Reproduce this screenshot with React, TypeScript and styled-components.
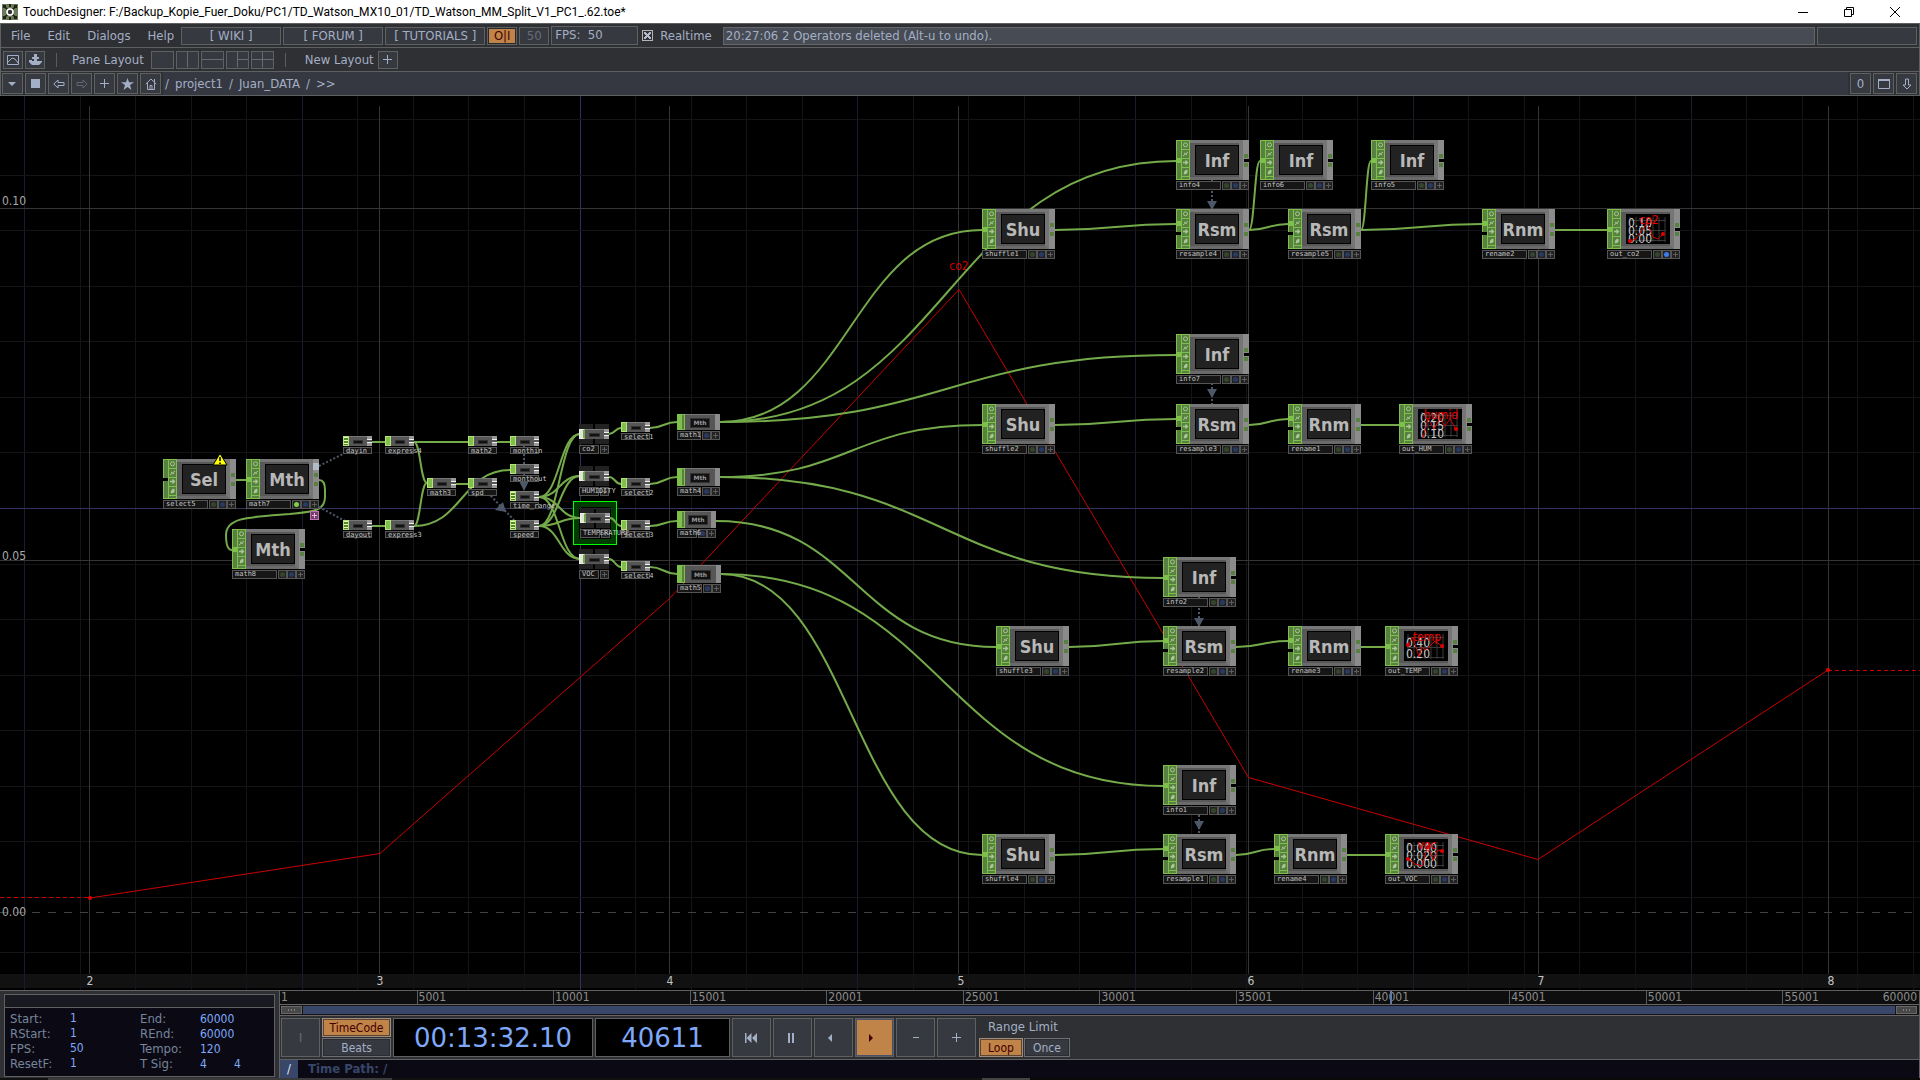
import React from "react";
import styled, { createGlobalStyle, css } from "styled-components";

const UI = '"DejaVu Sans Condensed", "DejaVu Sans", Verdana, sans-serif';
const WIDE = '"DejaVu Sans", Verdana, sans-serif';
const MONO = '"DejaVu Sans Mono", monospace';

const c = {
  bar: "#2f3033",
  line: "#5f6062",
  btn: "#373941",
  text: "#a3afc6",
  orange: "#c08348",
  maroon: "#430000",
  navy: "#0b0a14",
  blue: "#7fa8f8",
  range: "#374669",
  green: "#7dc14b",
  greenDark: "#588040",
  wire: "#74aa4a",
  slate: "#4c5868",
};

const Global = createGlobalStyle`
  *, *::before, *::after { box-sizing: border-box; }
  body { margin: 0; background: #000; overflow: hidden; }
  button, input { font: inherit; color: inherit; margin: 0; }
`;

const App = styled.div`
  display: flex;
  flex-direction: column;
  height: 100vh;
  font: 12px/14px ${UI};
  color: ${c.text};
  background: ${c.bar};
`;

/* ---------- window title ---------- */

const TitleBar = styled.header`
  display: flex;
  align-items: center;
  flex: none;
  height: 23px;
  padding-left: 2px;
  gap: 5px;
  background: #fff;
  color: #000;
`;
const Title = styled.h1`
  flex: 1;
  margin: 0;
  font: 12px/20px Roboto, "Open Sans", sans-serif;
  white-space: nowrap;
`;
const WindowButtons = styled.div`
  display: flex;
  padding-right: 2px;
`;
const WindowButton = styled.button`
  display: grid;
  place-items: center;
  width: 46px;
  height: 20px;
  padding: 0;
  border: 0;
  background: none;
`;

/* ---------- tool bars ---------- */

const Bar = styled.div`
  display: flex;
  align-items: center;
  flex: none;
  height: 24px;
  border: 1px solid ${c.line};
  border-bottom: 0;
  background: ${c.bar};
  font-size: 13px;
  white-space: nowrap;
`;
const MenuBar = styled(Bar)`
  gap: 2px;
  padding: 0 2px;
`;
const Menus = styled.nav`
  display: flex;
  gap: 17px;
  padding: 0 5px 0 8px;
`;
const MenuItem = styled.button`
  padding: 0;
  border: 0;
  background: none;
`;
const Boxed = css`
  border: 1px solid ${c.line};
  background: ${c.btn};
`;
const BarButton = styled.button<{ $w: number; $on?: boolean; $dim?: boolean }>`
  ${Boxed}
  width: ${(p) => p.$w}px;
  height: 18px;
  padding: 0;
  line-height: 16px;
  white-space: pre;
  ${(p) => p.$dim && "color: #696c74;"}
  ${(p) =>
    p.$on &&
    css`
      background: ${c.orange};
      color: ${c.maroon};
      box-shadow: inset 0 0 0 1px #26282e;
    `}
`;
const Fps = styled.output`
  ${Boxed}
  width: 87px;
  height: 19px;
  padding-left: 3px;
  line-height: 16px;
  white-space: pre;
`;
const Realtime = styled.label`
  display: flex;
  align-items: center;
  gap: 7px;
  padding: 0 9px 0 2px;
`;
const Tick = styled.input`
  appearance: none;
  display: grid;
  place-items: center;
  width: 11px;
  height: 11px;
  border: 1px solid #b4b4b4;
  &:checked::before {
    content: "";
    width: 7px;
    height: 7px;
    background: linear-gradient(45deg, transparent 38%, #b4bccc 38% 62%, transparent 62%),
      linear-gradient(-45deg, transparent 38%, #b4bccc 38% 62%, transparent 62%);
  }
`;
const Message = styled.input`
  flex: 1;
  min-width: 0;
  height: 18px;
  padding: 0 2px;
  border: 1px solid #63676d;
  background: #474b53;
  outline: 0;
`;
const Empty = styled.div`
  ${Boxed}
  width: 100px;
  height: 18px;
`;

const PaneBar = styled(Bar)`
  gap: 2px;
  padding: 0 2px;
`;
const Divider = styled.span<{ $after: number }>`
  width: 1px;
  height: 14px;
  margin: 0 ${(p) => p.$after}px 0 9px;
  background: #5a5b5e;
`;
const BarLabel = styled.span<{ $after: number }>`
  padding-right: ${(p) => p.$after}px;
`;
const IconButton = styled.button<{ $w?: number; $h?: number; $dim?: boolean }>`
  ${Boxed}
  display: grid;
  place-items: center;
  width: ${(p) => p.$w ?? 20}px;
  height: ${(p) => p.$h ?? 18}px;
  padding: 0;
  color: ${(p) => (p.$dim ? "#62656c" : c.text)};
`;

const PathBar = styled(Bar)`
  gap: 2px;
  padding: 0 2px 0 1px;
`;
const Crumbs = styled.div`
  display: flex;
  align-items: center;
  flex: 1;
  align-self: stretch;
  gap: 6px;
  padding-left: 2px;
  background: #363841;
`;
const Crumb = styled.a`
  color: inherit;
  text-decoration: none;
`;

/* ---------- network canvas ---------- */

const TOP = 96;

const Canvas = styled.main`
  position: relative;
  flex: 1;
  min-height: 0;
  overflow: hidden;
  border-top: 1px solid ${c.line};
  background: #000;
`;
const Drawing = styled.svg`
  position: absolute;
  inset: 0;
  width: 100%;
  height: 100%;
`;
const AxisStrip = styled.div`
  position: absolute;
  left: 0;
  right: 0;
  bottom: 2px;
  height: 14px;
  background: #111;
`;

const NodeBox = styled.div<{ $x: number; $y: number; $w: number }>`
  position: absolute;
  left: ${(p) => p.$x}px;
  top: ${(p) => p.$y - TOP}px;
  width: ${(p) => p.$w}px;
`;
const Tile = styled.div`
  display: flex;
  height: 40px;
`;
const Body = styled.div`
  display: flex;
  align-items: center;
  justify-content: flex-end;
  flex: 1;
  border-top: 3px solid #777;
  border-right: 4px solid #757575;
  border-bottom: 3px solid #6a6a6a;
  background: #585858;
`;
const Screen = styled.div`
  width: 44px;
  height: 30px;
  border: 1px solid #000;
  background: #222;
  color: #b8b8b8;
  font: bold 18px/29px ${UI};
  text-align: center;
`;
const Foot = styled.div<{ $h?: number }>`
  display: flex;
  gap: 1px;
  height: ${(p) => p.$h ?? 9}px;
  margin-top: 1px;
`;
const Name = styled.span`
  position: relative;
  z-index: 1;
  flex: 1;
  min-width: 0;
  padding-left: 2px;
  border: 1px solid #555;
  background: #161616;
  color: #c4c4c4;
  font: 7px/6px ${MONO};
  white-space: nowrap;
`;
const Flags = styled.span`
  display: flex;
`;
const Flag = styled.i<{ $c: string }>`
  display: grid;
  place-items: center;
  width: 9px;
  border: 1px solid #555;
  background: #222;
  &::before {
    content: "";
    width: 5px;
    height: 5px;
    border-radius: 50%;
    background: ${(p) => p.$c};
  }
`;
const PlusFlag = styled(Flag)`
  &::before {
    border-radius: 0;
    background: linear-gradient(#5c5c5c, #5c5c5c) center / 5px 1px no-repeat,
      linear-gradient(#5c5c5c, #5c5c5c) center / 1px 5px no-repeat;
  }
`;

const SmallTile = styled.div<{ $h: number }>`
  display: flex;
  height: ${(p) => p.$h}px;
  background: #777;
`;
const SmallIn = styled.span<{ $w: number; $comp?: boolean; $lines?: boolean }>`
  width: ${(p) => p.$w}px;
  border: 1px solid ${(p) => (p.$comp ? "#eee" : "#b8e07a")};
  background: ${(p) =>
    p.$lines
      ? "repeating-linear-gradient(#e4ffb0 0 1px, #4e8a2a 1px 3px)"
      : p.$comp
        ? "#dfe6d8"
        : c.green};
  ${(p) => p.$comp && `border-right: 2px solid ${c.wire};`}
`;
const MidIn = styled.span`
  width: 8px;
  border: 1px solid ${c.green};
  background: linear-gradient(90deg, ${c.green} 0 4px, ${c.greenDark} 4px);
`;
const SmallBody = styled.span`
  display: grid;
  place-items: center;
  flex: 1;
  border-top: 1px solid #777;
  background: #565656;
`;
const SmallScreen = styled.span<{ $w: number; $h: number }>`
  width: ${(p) => p.$w}px;
  height: ${(p) => p.$h}px;
  background: #111;
  color: #999;
  font: bold 6px/8px ${WIDE};
  text-align: center;
  outline: 1px solid #333;
`;
const SmallOut = styled.span`
  width: 5px;
  background: linear-gradient(#999 0 3px, #eee 3px 4px, #555 4px 6px, #eee 6px 7px, #999 7px);
`;
const MidOut = styled.span`
  width: 5px;
  background: #8c8c8c;
`;
const Blocks = styled.div`
  display: flex;
  justify-content: space-between;
  height: 5px;
  &::before,
  &::after {
    content: "";
    width: 14px;
    background: #222;
  }
`;
const Selection = styled.div`
  position: absolute;
  left: 573px;
  top: ${501 - TOP}px;
  width: 44px;
  height: 44px;
  border: 1px solid #00ff00;
  box-shadow: inset 0 0 0 5px #003c00;
`;

const SocketStrip = ({ two, wired = true }: { two?: boolean; wired?: boolean }) => (
  <svg width="14" height="40">
    <rect width="14" height="40" fill={c.green} />
    <rect x="1" y="1" width="4" height="38" fill={c.greenDark} />
    {[1, 10, 19, 28].map((y) => (
      <rect key={y} x="6" y={y} width="7" height="8" fill={c.greenDark} />
    ))}
    <rect x="6" y="37" width="7" height="2" fill={c.greenDark} />
    {wired && <rect x="0" y={two ? 12 : 18} width="5" height="5" fill={c.green} />}
    {two && <rect x="0" y="23" width="5" height="3" fill="#000" />}
    {!wired && <rect x="0" y="19" width="5" height="3" fill="#000" />}
    <g fill="none" stroke="#a9c795">
      <circle cx="9.5" cy="4.8" r="2" />
      <path d="M7 16l5-4M8 13l3 2" />
      <path d="M7 22.5h4M9.5 20.5l2 2-2 2" strokeWidth="1.3" />
      <path d="M8 34l1-3 2-1v3z" fill="#a9c795" />
    </g>
  </svg>
);

const OutStrip = ({ open }: { open?: boolean }) => (
  <svg width="6" height="40">
    <rect width="6" height="40" fill="#8b8b8b" />
    {open && <rect x="1" y="19" width="5" height="3" fill="#000" />}
    <rect x="1" y="14" width="4" height="4" fill={c.greenDark} />
    <rect x="1" y="23" width="4" height="4" fill={c.greenDark} />
  </svg>
);

const Chart = styled.svg`
  display: block;
  overflow: visible;
`;

type Mini = { label: string; rows: string[]; path: string; dots: number[][] };
const MiniChart = ({ label, rows, path, dots }: Mini) => (
  <Chart width="42" height="28">
    <rect width="42" height="28" fill="#000" />
    <path d="M3 2v25M9 2v25M15 2v25M20 2v25M26 2v25M32 2v25M38 2v25M2 5.5h37M2 15.5h37M2 25.5h37" stroke="#3a3a3a" />
    <g fill="#c8c8c8" fontFamily={UI} fontSize="12" fontWeight="normal">
      {rows.map((r, i) => (
        <text key={i} x="1" y={rows.length === 2 ? 15 + i * 11 : 12 + i * 8}>
          {r}
        </text>
      ))}
    </g>
    <path d={path} fill="none" stroke="#d40000" />
    {dots.map(([x, y]) => (
      <circle key={x} cx={x} cy={y} r="2" fill="#e00000" />
    ))}
    <text x="22" y="9" fill="#ee0000" fontFamily={UI} fontSize="12" fontWeight="normal" textAnchor="middle">
      {label}
    </text>
  </Chart>
);

type Op = {
  x: number;
  y: number;
  tag?: string;
  name: string;
  two?: boolean;
  open?: boolean;
  loose?: boolean;
  bypass?: boolean;
  shown?: boolean;
  mini?: Mini;
};

const ops: Op[] = [
  { x: 163, y: 459, tag: "Sel", name: "select5", loose: true },
  { x: 246, y: 459, tag: "Mth", name: "math7", bypass: true },
  { x: 232, y: 529, tag: "Mth", name: "math8", open: true },
  { x: 1176, y: 140, tag: "Inf", name: "info4", open: true },
  { x: 1260, y: 140, tag: "Inf", name: "info6", open: true },
  { x: 1371, y: 140, tag: "Inf", name: "info5", open: true },
  { x: 982, y: 209, tag: "Shu", name: "shuffle1" },
  { x: 1176, y: 209, tag: "Rsm", name: "resample4", two: true },
  { x: 1288, y: 209, tag: "Rsm", name: "resample5", two: true },
  { x: 1482, y: 209, tag: "Rnm", name: "rename2", two: true },
  {
    x: 1607, y: 209, name: "out_co2", open: true, shown: true,
    mini: { label: "co2", rows: ["0.10", "0.05", "0.00"], path: "M3 26L9 24L20 8L26 22L31 24L36 19", dots: [[3, 26], [36, 19]] },
  },
  { x: 1176, y: 334, tag: "Inf", name: "info7", open: true },
  { x: 982, y: 404, tag: "Shu", name: "shuffle2" },
  { x: 1176, y: 404, tag: "Rsm", name: "resample3", two: true },
  { x: 1288, y: 404, tag: "Rnm", name: "rename1", two: true },
  {
    x: 1399, y: 404, name: "out_HUM", open: true,
    mini: { label: "humid", rows: ["0.20", "0.15", "0.10"], path: "M4 28L9 8L15 19L21 8L26 16L31 9L37 19", dots: [[37, 19]] },
  },
  { x: 1163, y: 557, tag: "Inf", name: "info2", open: true },
  { x: 996, y: 626, tag: "Shu", name: "shuffle3" },
  { x: 1163, y: 626, tag: "Rsm", name: "resample2", two: true },
  { x: 1288, y: 626, tag: "Rnm", name: "rename3", two: true },
  {
    x: 1385, y: 626, name: "out_TEMP", open: true,
    mini: { label: "temp", rows: ["0.40", "0.20"], path: "M3 13L8 5L14 25L17 15L20 18L24 15L30 9L37 14", dots: [[3, 13], [37, 14]] },
  },
  { x: 1163, y: 765, tag: "Inf", name: "info1", open: true },
  { x: 982, y: 834, tag: "Shu", name: "shuffle4" },
  { x: 1163, y: 834, tag: "Rsm", name: "resample1", two: true },
  { x: 1274, y: 834, tag: "Rnm", name: "rename4", two: true },
  {
    x: 1385, y: 834, name: "out_VOC", open: true,
    mini: { label: "voc", rows: ["0.040", "0.020", "0.000"], path: "M3 19L10 24L17 26L23 5L28 20L33 10L37 11", dots: [[3, 19], [37, 11]] },
  },
];

const Operator = ({ x, y, tag, name, two, open, loose, bypass, shown, mini }: Op) => (
  <NodeBox $x={x} $y={y} $w={73}>
    <Tile>
      <SocketStrip two={two} wired={!loose} />
      <Body>
        <Screen>{mini ? <MiniChart {...mini} /> : tag}</Screen>
      </Body>
      <OutStrip open={open} />
    </Tile>
    <Foot>
      <Name>{name}</Name>
      <Flags>
        <Flag $c={bypass ? "#7dd04a" : "#33452b"} />
        <Flag $c={shown ? "#3b7cf0" : "#263a63"} />
        <PlusFlag $c="" />
      </Flags>
    </Foot>
  </NodeBox>
);

type SmallOp = { x: number; y: number; name: string; lines?: boolean };
const smallOps: SmallOp[] = [
  { x: 343, y: 436, name: "dayin", lines: true },
  { x: 385, y: 436, name: "express4" },
  { x: 427, y: 478, name: "math3" },
  { x: 343, y: 520, name: "dayout", lines: true },
  { x: 385, y: 520, name: "express3" },
  { x: 468, y: 436, name: "math2" },
  { x: 510, y: 436, name: "monthin" },
  { x: 510, y: 464, name: "monthout" },
  { x: 468, y: 478, name: "spd" },
  { x: 510, y: 491, name: "time_range", lines: true },
  { x: 510, y: 520, name: "speed", lines: true },
  { x: 621, y: 422, name: "select1" },
  { x: 621, y: 478, name: "select2" },
  { x: 621, y: 520, name: "select3" },
  { x: 621, y: 561, name: "select4" },
];
const comps: SmallOp[] = [
  { x: 579, y: 424, name: "co2" },
  { x: 579, y: 466, name: "HUMIDITY" },
  { x: 580, y: 508, name: "TEMPERATURE" },
  { x: 579, y: 549, name: "VOC" },
];
const midOps = [
  { x: 677, y: 414, w: 43, h: 16, name: "math1" },
  { x: 677, y: 468, w: 43, h: 18, name: "math4" },
  { x: 677, y: 511, w: 39, h: 17, name: "math6" },
  { x: 677, y: 565, w: 44, h: 18, name: "math5" },
];

/* ---------- wires ---------- */

type Wire = [number, number, number, number];
const wires: Wire[] = [
  [720, 422, 982, 230], [720, 422, 1176, 161], [720, 422, 1176, 355],
  [720, 477, 982, 425], [720, 477, 1163, 578],
  [716, 521, 996, 647],
  [721, 574, 1163, 786], [721, 574, 982, 855],
  [1055, 230, 1176, 224], [1249, 230, 1288, 224], [1249, 230, 1260, 161],
  [1361, 230, 1482, 224], [1361, 230, 1371, 161], [1555, 230, 1607, 230],
  [1055, 425, 1176, 419], [1249, 425, 1288, 419], [1361, 425, 1399, 425],
  [1069, 647, 1163, 641], [1236, 647, 1288, 641], [1361, 647, 1385, 647],
  [1055, 855, 1163, 849], [1236, 855, 1274, 849], [1347, 855, 1385, 855],
  [236, 480, 246, 480],
  [372, 442, 385, 442], [414, 442, 468, 442], [414, 442, 427, 483],
  [372, 526, 385, 526], [414, 526, 427, 483], [414, 526, 510, 470],
  [456, 484, 468, 484], [497, 442, 510, 442],
  ...[497, 526].flatMap((y) => [434, 476, 518, 559].map((t): Wire => [539, y, 580, t])),
  [609, 434, 621, 428], [609, 477, 621, 484], [610, 518, 621, 526], [609, 559, 621, 567],
  [650, 428, 677, 422], [650, 484, 677, 477], [650, 526, 677, 521], [650, 567, 677, 574],
];
const curve = ([a, b, d, e]: Wire) => {
  const m = (a + d) / 2;
  return `M${a} ${b}C${m} ${b} ${m} ${e} ${d} ${e}`;
};

const steps = (from: number, n: number) => Array.from({ length: n }, (_, i) => from + i);

const Backdrop = () => (
  <Drawing>
    <g transform={`translate(0 ${-TOP})`}>
      {steps(-10, 48).map((i) => (
        <rect key={`v${i}`} x={Math.floor(580 + i * 55.55)} y="96" width="1" height="894"
          fill={i === 0 ? "#30305c" : i % 5 === 0 ? "#1b1b2c" : "#131318"} />
      ))}
      {steps(-7, 16).map((i) => (
        <rect key={`h${i}`} x="0" y={Math.round(508 + i * 55.55)} width="100%" height="1"
          fill={i === 0 ? "#33335e" : "#131318"} />
      ))}
      {steps(0, 7).map((i) => (
        <rect key={`g${i}`} x={Math.round(89 + i * 289.8)} y="106" width="1" height="868" fill="#353535" />
      ))}
      <path d="M0 208.5H4000M0 560.5H4000" stroke="#353535" />
      <path d="M0 912.5H4000" stroke="#404040" strokeDasharray="8 8" />
      <g fill="none" stroke="#cc0000">
        <path d="M90 898L380 853.5L669 599L959 289.5L1248.5 777.5L1538 859.5L1828 670" />
        <path d="M0 897.5H90M1828 670.5H4000" strokeDasharray="4 3" />
      </g>
      <circle cx="90" cy="898" r="2" fill="#e00000" />
      <circle cx="1828" cy="670" r="2" fill="#e00000" />
      <text x="959" y="270" textAnchor="middle" fill="#d00000" fontFamily={UI} fontSize="12">
        co2
      </text>
      <g fill="#a8a8a8" fontFamily={UI} fontSize="12">
        <text x="2" y="205">0.10</text>
        <text x="2" y="560">0.05</text>
        <text x="2" y="916">0.00</text>
      </g>
    </g>
  </Drawing>
);

const AxisLabels = () => (
  <Drawing>
    <g transform={`translate(0 ${-TOP})`} fill="#c4c4c4" fontFamily={UI} fontSize="12" textAnchor="middle">
      {steps(0, 7).map((i) => (
        <text key={i} x={Math.round(90 + i * 290.2)} y="985">
          {i + 2}
        </text>
      ))}
    </g>
  </Drawing>
);

const Wires = () => (
  <Drawing>
    <g transform={`translate(0 ${-TOP})`} fill="none">
      <g stroke={c.wire} strokeWidth="2">
        {wires.map((w, i) => (
          <path key={i} d={curve(w)} />
        ))}
        <path d="M319 480C324 480 325 485 325 490V497C325 512 310 512 290 514C250 517 226 517 226 535C226 546 228 550 232 550" />
      </g>
      <path d="M319 466L347 452M319 507L347 522M524 446V482M488 493L514 520" stroke={c.slate} strokeWidth="2" strokeDasharray="2 2" />
      <path d="M519 481h10l-5 10zM495 510l8-8 3 10z" fill={c.slate} />
      {[[1212, 179], [1212, 367], [1199, 596], [1199, 799]].map(([x, y]) => (
        <g key={y}>
          <path d={`M${x} ${y}v37`} stroke={c.slate} strokeWidth="2" strokeDasharray="2 2" />
          <path d={`M${x - 5} ${y + 22}h10l-5 9z`} fill={c.slate} />
        </g>
      ))}
    </g>
  </Drawing>
);

const Badges = () => (
  <Drawing>
    <g transform={`translate(0 ${-TOP})`}>
      <path d="M220 453.5l7 11.5h-14z" fill="#ff0" stroke="#000" strokeLinejoin="round" />
      <path d="M220 457v4M220 462.5v1.5" stroke="#000" strokeWidth="1.6" />
      <rect x="310.5" y="511.5" width="8" height="8" fill="#70406a" stroke="#c46cb4" />
      <path d="M312 515.5h5M314.5 513v5" stroke="#e6b4dc" />
      <rect x="313" y="463" width="6" height="7" fill="#b0bcc8" />
    </g>
  </Drawing>
);

/* ---------- timeline ---------- */

const Timeline = styled.footer`
  display: grid;
  grid-template-columns: 279px 1fr;
  flex: none;
  height: 88px;
  border-top: 1px solid ${c.line};
`;
const Settings = styled.section`
  display: flex;
  flex-direction: column;
  margin: 3px 4px 1px 4px;
  border: 1px solid ${c.line};
  background: ${c.navy};
`;
const SettingsHead = styled.div`
  flex: none;
  height: 13px;
  border-bottom: 1px solid ${c.line};
  background: #191922;
`;
const SettingsGrid = styled.div`
  display: grid;
  grid-template-columns: 60px 70px 60px 1fr;
  grid-auto-rows: 15px;
  padding: 3px 0 0 5px;
  color: #76859a;
  font-size: 13px;
  line-height: 15px;
`;
const Value = styled.input`
  min-width: 0;
  width: 34px;
  padding: 0;
  border: 0;
  outline: 0;
  background: none;
  color: ${c.blue};
  font-size: 12px;
  line-height: 15px;
`;
const Right = styled.section`
  display: flex;
  flex-direction: column;
  min-width: 0;
  border-left: 1px solid ${c.line};
  border-right: 1px solid ${c.line};
`;
const Ruler = styled.div`
  position: relative;
  display: grid;
  grid-template-columns: repeat(12, 1fr);
  flex: none;
  height: 14px;
  border-bottom: 1px solid #686468;
  background: #0e0e0e;
  color: #8c8c8c;
  line-height: 13px;
`;
const RulerCell = styled.span`
  padding-left: 1px;
  & + & {
    border-left: 1px solid #5c5c5c;
  }
`;
const RulerEnd = styled.span`
  position: absolute;
  right: 2px;
  top: 0;
`;
const Playhead = styled.i`
  position: absolute;
  left: 67.7%;
  top: 0;
  bottom: 0;
  width: 2px;
  background: #6478a4;
`;
const RangeRow = styled.div`
  display: flex;
  gap: 1px;
  flex: none;
  height: 11px;
  padding: 1px 2px 1px 1px;
  border-bottom: 1px solid #686468;
  background: #141414;
`;
const Handle = styled.button`
  width: 21px;
  padding: 0;
  border: 1px solid #686868;
  background: repeating-linear-gradient(90deg, #808080 0 1px, transparent 1px 3px) center / 7px 2px no-repeat #484848;
`;
const Range = styled.div`
  flex: 1;
  background: ${c.range};
`;
const Transport = styled.div`
  display: flex;
  gap: 2px;
  flex: none;
  height: 44px;
  padding: 2px 1px;
  border-bottom: 1px solid ${c.line};
`;
const Square = styled.button<{ $on?: boolean; $dim?: boolean }>`
  ${Boxed}
  display: grid;
  place-items: center;
  width: 39px;
  height: 39px;
  padding: 0;
  color: ${(p) => (p.$dim ? "#6c7078" : p.$on ? c.maroon : c.text)};
  ${(p) => p.$on && `background: ${c.orange}; box-shadow: inset 0 0 0 1px #4a5068;`}
`;
const Stack = styled.div`
  display: flex;
  flex-direction: column;
  gap: 1px;
`;
const Toggle = styled.button<{ $w: number; $on?: boolean }>`
  width: ${(p) => p.$w}px;
  height: 19px;
  padding: 0;
  border: 1px solid ${(p) => (p.$on ? "#a08c7c" : "#6c6e74")};
  background: ${(p) => (p.$on ? c.orange : c.btn)};
  color: ${(p) => (p.$on ? c.maroon : c.text)};
  box-shadow: inset 0 0 0 1px ${(p) => (p.$on ? "#5c4430" : "#2b2d33")};
`;
const Readout = styled.output<{ $w: number }>`
  width: ${(p) => p.$w}px;
  height: 39px;
  border: 1px solid ${c.line};
  background: #000;
  color: ${c.blue};
  font: 26px/39px ${WIDE};
  text-align: center;
`;
const Limit = styled.fieldset`
  display: flex;
  flex-direction: column;
  justify-content: space-between;
  height: 39px;
  margin: 0;
  padding: 2px 0 0 1px;
  border: 0;
  > span {
    padding-left: 9px;
    font-size: 13px;
  }
`;
const Pair = styled.div`
  display: flex;
  gap: 1px;
`;
const TimePath = styled.div`
  display: flex;
  align-items: center;
  gap: 10px;
  flex: 1;
  background: ${c.navy};
  color: ${c.range};
  font-size: 13px;
  font-weight: bold;
`;
const Slash = styled.button`
  align-self: stretch;
  width: 18px;
  padding: 0;
  border: 0;
  background: ${c.range};
  color: #dde4f4;
  font-weight: normal;
`;
const Edge = styled.div`
  flex: none;
  height: 2px;
  background: linear-gradient(90deg, #111 48px, #3a3a3a 48px 392px, #111 392px 982px, #444 982px 1030px, #0a0a0a 1030px);
`;

const settings = [
  ["Start:", "1", "End:", "60000"],
  ["RStart:", "1", "REnd:", "60000"],
  ["FPS:", "50", "Tempo:", "120"],
  ["ResetF:", "1", "T Sig:", "4", "4"],
];

const layouts = ["", "M11 0V16", "M0 8H22", "M11 0V16M11 8H22", "M11 0V16M0 8H22"];

const stroke = { fill: "none", stroke: "currentColor" };

export default function TouchDesigner() {
  return (
    <App>
      <Global />
      <TitleBar>
        <svg width="16" height="16" viewBox="0 0 16 16">
          <rect width="16" height="16" fill="#6d7a5a" />
          <path d="M2 2l4 4M14 2l-4 4M2 14l4-4M14 14l-4-4" stroke="#151a10" strokeWidth="1.5" />
          <path d="M1 1h3v3H1zM12 1h3v3h-3zM1 12h3v3H1zM12 12h3v3h-3zM7 0h2v3H7zM7 13h2v3H7z" fill="#1c2216" />
          <circle cx="8" cy="8" r="3" fill="#333" stroke="#fff" strokeWidth="1.6" />
        </svg>
        <Title>TouchDesigner: F:/Backup_Kopie_Fuer_Doku/PC1/TD_Watson_MX10_01/TD_Watson_MM_Split_V1_PC1_.62.toe*</Title>
        <WindowButtons>
          <WindowButton aria-label="Minimize">
            <svg width="10" height="10" {...stroke}><path d="M0 5.5h10" /></svg>
          </WindowButton>
          <WindowButton aria-label="Restore">
            <svg width="10" height="10" {...stroke}><path d="M.5 2.5h7v7h-7zM2.5 2.5v-2h7v7h-2" /></svg>
          </WindowButton>
          <WindowButton aria-label="Close">
            <svg width="10" height="10" {...stroke}><path d="M0 0l10 10M10 0L0 10" /></svg>
          </WindowButton>
        </WindowButtons>
      </TitleBar>

      <MenuBar>
        <Menus>
          {["File", "Edit", "Dialogs", "Help"].map((m) => <MenuItem key={m}>{m}</MenuItem>)}
        </Menus>
        <BarButton $w={100}>{"[ WIKI ]"}</BarButton>
        <BarButton $w={100}>{"[ FORUM ]"}</BarButton>
        <BarButton $w={100}>{"[ TUTORIALS ]"}</BarButton>
        <BarButton $w={30} $on>O|I</BarButton>
        <BarButton $w={30} $dim>50</BarButton>
        <Fps>{"FPS:  50"}</Fps>
        <Realtime>
          <Tick type="checkbox" defaultChecked />
          Realtime
        </Realtime>
        <Message aria-label="Status" readOnly value="20:27:06 2 Operators deleted (Alt-u to undo)." />
        <Empty />
      </MenuBar>

      <PaneBar>
        <IconButton aria-label="Palette">
          <svg width="12" height="10" {...stroke}><path d="M.5 .5h11v9H.5zM1 7l4-4 3 1 3 4" /></svg>
        </IconButton>
        <IconButton aria-label="Bookmark">
          <svg width="13" height="13" fill="currentColor"><path d="M5 1h3v3h2v2H8v2h5v1l-3 3H3L0 9V7h3v1h2V6H3V4h2z" /></svg>
        </IconButton>
        <Divider $after={13} />
        <BarLabel $after={5}>Pane Layout</BarLabel>
        {layouts.map((d, i) => (
          <IconButton key={i} $w={23} aria-label={`Layout ${i + 1}`}>
            <svg width="21" height="16"><path d={d} transform="translate(-.5 -.5)" stroke="#6a6b6e" /></svg>
          </IconButton>
        ))}
        <Divider $after={17} />
        <BarLabel $after={2}>New Layout</BarLabel>
        <IconButton aria-label="Add layout">
          <svg width="9" height="9" {...stroke}><path d="M4.5 0v9M0 4.5h9" /></svg>
        </IconButton>
      </PaneBar>

      <PathBar>
        <IconButton $w={21} $h={21} aria-label="Pane type">
          <svg width="10" height="4" fill="currentColor"><path d="M0 0h8L4 4z" /></svg>
        </IconButton>
        <IconButton $w={21} $h={21} aria-label="Stop">
          <svg width="9" height="9" fill="currentColor"><path d="M0 0h9v9H0z" /></svg>
        </IconButton>
        <IconButton $w={21} $h={21} aria-label="Back">
          <svg width="12" height="10" {...stroke}><path d="M.8 5L5 1v2.5h6v3H5V9z" /></svg>
        </IconButton>
        <IconButton $w={21} $h={21} $dim aria-label="Forward">
          <svg width="12" height="10" {...stroke}><path d="M11.2 5L7 1v2.5H1v3h6V9z" /></svg>
        </IconButton>
        <IconButton $w={21} $h={21} aria-label="Add">
          <svg width="9" height="9" {...stroke}><path d="M4.5 0v9M0 4.5h9" /></svg>
        </IconButton>
        <IconButton $w={21} $h={21} aria-label="Favourite">
          <svg width="13" height="12" fill="currentColor"><path d="M6.5 0L8 4.3h5L9 7l1.5 5-4-3-4 3L4 7 0 4.3h5z" /></svg>
        </IconButton>
        <IconButton $w={21} $h={21} aria-label="Home">
          <svg width="12" height="12" {...stroke}><path d="M.8 6L6 1l5.2 5M2.5 5v6.5h7V5M5 11V7.5h2V11M9.5 4V1" /></svg>
        </IconButton>
        <Crumbs>
          <span>/</span>
          <Crumb href="#project1">project1</Crumb>
          <span>/</span>
          <Crumb href="#Juan_DATA">Juan_DATA</Crumb>
          <span>/</span>
          <span>&gt;&gt;</span>
        </Crumbs>
        <IconButton $w={21} $h={21}>0</IconButton>
        <IconButton $w={21} $h={21} aria-label="Maximise pane">
          <svg width="12" height="10" {...stroke}><path d="M.5 .5h11v9H.5z" /><path d="M0 1h12" strokeWidth="2" /></svg>
        </IconButton>
        <IconButton $w={21} $h={21} aria-label="Collapse pane">
          <svg width="10" height="12" {...stroke}><path d="M5 11L1 7h2.5V1h3v6H9z" /></svg>
        </IconButton>
      </PathBar>

      <Canvas>
        <AxisStrip />
        <Backdrop />
        <AxisLabels />
        <Selection />
        <Wires />
        {smallOps.map((o) => (
          <NodeBox key={o.name} $x={o.x} $y={o.y} $w={29}>
            <SmallTile $h={10}>
              <SmallIn $w={6} $lines={o.lines} />
              <SmallBody><SmallScreen $w={8} $h={2} /></SmallBody>
              <SmallOut />
            </SmallTile>
            <Foot $h={7}><Name>{o.name}</Name></Foot>
          </NodeBox>
        ))}
        {comps.map((o) => (
          <NodeBox key={o.name} $x={o.x} $y={o.y} $w={30}>
            <Blocks />
            <SmallTile $h={10}>
              <SmallIn $w={6} $comp />
              <SmallBody><SmallScreen $w={9} $h={2} /></SmallBody>
              <SmallOut />
            </SmallTile>
            <Blocks />
            <Foot>
              <Name>{o.name}</Name>
              <PlusFlag $c="" />
            </Foot>
          </NodeBox>
        ))}
        {midOps.map((o) => (
          <NodeBox key={o.name} $x={o.x} $y={o.y} $w={o.w}>
            <SmallTile $h={o.h}>
              <MidIn />
              <SmallBody><SmallScreen $w={18} $h={8}>Mth</SmallScreen></SmallBody>
              <MidOut />
            </SmallTile>
            <Foot>
              <Name>{o.name}</Name>
              <Flags>
                <Flag $c="#263a63" />
                <PlusFlag $c="" />
              </Flags>
            </Foot>
          </NodeBox>
        ))}
        {ops.map((o) => <Operator key={o.name} {...o} />)}
        <Badges />
      </Canvas>

      <Timeline>
        <Settings>
          <SettingsHead />
          <SettingsGrid>
            {settings.map(([a, av, b, bv, extra]) => (
              <React.Fragment key={a}>
                <label htmlFor={a}>{a}</label>
                <Value id={a} defaultValue={av} />
                <label htmlFor={b}>{b}</label>
                <span>
                  <Value id={b} defaultValue={bv} />
                  {extra && <Value aria-label="Beat unit" defaultValue={extra} />}
                </span>
              </React.Fragment>
            ))}
          </SettingsGrid>
        </Settings>
        <Right>
          <Ruler>
            {steps(0, 12).map((i) => <RulerCell key={i}>{i * 5000 + 1}</RulerCell>)}
            <RulerEnd>60000</RulerEnd>
            <Playhead />
          </Ruler>
          <RangeRow>
            <Handle aria-label="Range start" />
            <Range />
            <Handle aria-label="Range end" />
          </RangeRow>
          <Transport>
            <Square $dim>I</Square>
            <Stack>
              <Toggle $w={69} $on>TimeCode</Toggle>
              <Toggle $w={69}>Beats</Toggle>
            </Stack>
            <Readout $w={200}>00:13:32.10</Readout>
            <Readout $w={135}>40611</Readout>
            <Square aria-label="Rewind">
              <svg width="14" height="10" fill="currentColor"><path d="M0 0h1.5v10H0zM6.5 0v10L1.5 5zM12 0v10L7 5z" /></svg>
            </Square>
            <Square aria-label="Pause">
              <svg width="10" height="10" fill="currentColor"><path d="M0 0h2v10H0zM4 0h2v10H4z" /></svg>
            </Square>
            <Square aria-label="Play backwards">
              <svg width="12" height="8" fill="currentColor"><path d="M4 0v8L0 4z" /></svg>
            </Square>
            <Square $on aria-label="Play">
              <svg width="12" height="8" fill="currentColor"><path d="M0 0v8l4-4z" /></svg>
            </Square>
            <Square aria-label="Step back">
              <svg width="6" height="9" {...stroke}><path d="M0 4.5h6" /></svg>
            </Square>
            <Square aria-label="Step forward">
              <svg width="9" height="9" {...stroke}><path d="M4.5 0v9M0 4.5h9" /></svg>
            </Square>
            <Limit>
              <span>Range Limit</span>
              <Pair>
                <Toggle $w={44} $on>Loop</Toggle>
                <Toggle $w={46}>Once</Toggle>
              </Pair>
            </Limit>
          </Transport>
          <TimePath>
            <Slash>/</Slash>
            <span>Time Path: /</span>
          </TimePath>
        </Right>
      </Timeline>
      <Edge />
    </App>
  );
}
